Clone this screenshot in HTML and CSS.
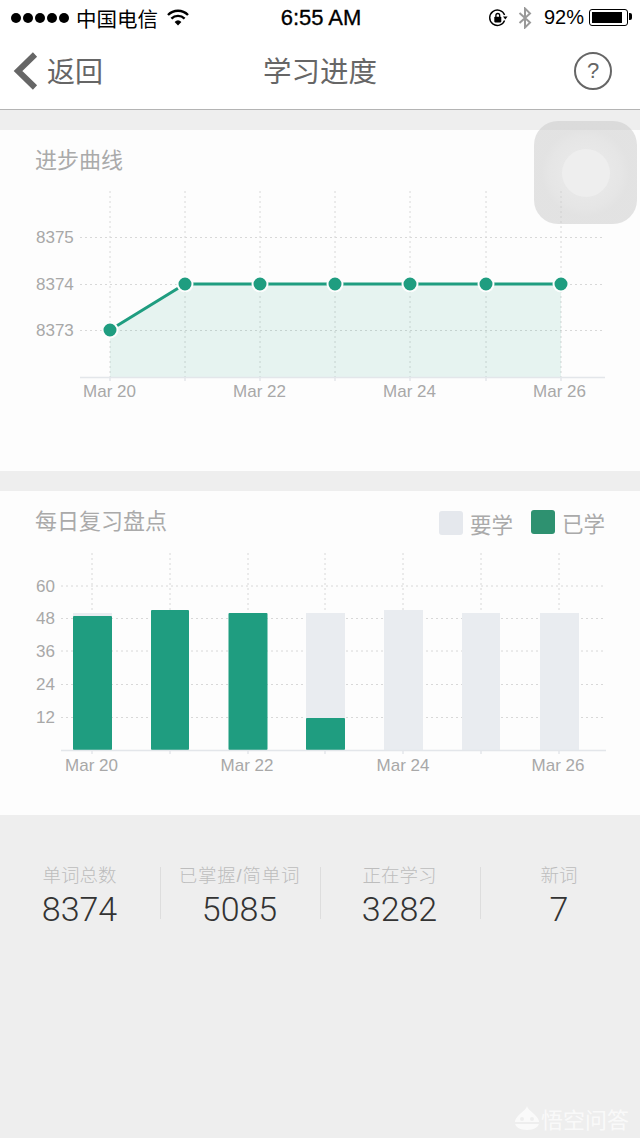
FILE: index.html
```html
<!DOCTYPE html>
<html lang="zh-CN">
<head>
    <meta charset="UTF-8">
    <meta name="viewport" content="width=device-width, initial-scale=1.0">
    <title>学习进度</title>
    <link rel="stylesheet" href="styles.css">
</head>
<body>

    <!-- Status bar -->
    <div class="status-bar">
        <div class="status-left">
            <div class="signal"><span></span><span></span><span></span><span></span><span></span></div>
            <span class="carrier">中国电信</span>
            <svg class="wifi" width="22" height="17" viewBox="0 0 22 17">
                <path d="M1 6 A14 14 0 0 1 21 6" fill="none" stroke="#000" stroke-width="2.4"/>
                <path d="M4.4 9.6 A9.4 9.4 0 0 1 17.6 9.6" fill="none" stroke="#000" stroke-width="2.4"/>
                <path d="M7.6 12.9 A5 5 0 0 1 14.4 12.9 L11 16.4 Z" fill="#000"/>
            </svg>
        </div>
        <div class="clock">6:55 AM</div>
        <div class="status-right">
            <svg width="20" height="20" viewBox="0 0 20 20">
                <path d="M16.6 12.5 A7.7 7.7 0 1 1 16.6 7" fill="none" stroke="#000" stroke-width="1.4"/>
                <path d="M15 8.6 L19.6 8.6 L17.3 11.4 Z" fill="#000"/>
                <rect x="6.3" y="8.8" width="7" height="5.6" rx="0.8" fill="#000"/>
                <path d="M7.9 9 V7.4 A1.9 1.9 0 0 1 11.7 7.4 V9" fill="none" stroke="#000" stroke-width="1.3"/>
            </svg>
            <svg class="bluetooth" width="14" height="22" viewBox="0 0 14 22">
                <path d="M1.5 6 L12 15.6 L7 20.5 V1.5 L12 6.4 L1.5 16" fill="none" stroke="#999" stroke-width="2"/>
            </svg>
            <span class="battery-text">92%</span>
            <div class="battery"><div class="battery-level"></div></div>
        </div>
    </div>

    <!-- Nav -->
    <div class="nav">
        <div class="nav-back">
            <svg width="26" height="38" viewBox="0 0 26 38">
                <path d="M22 2.5 L5 19 L22 35.5" fill="none" stroke="#666" stroke-width="6"/>
            </svg>
            <span class="nav-back-text">返回</span>
        </div>
        <div class="nav-title">学习进度</div>
        <div class="nav-help">?</div>
    </div>

    <!-- Progress curve -->
    <div class="card card-curve">
        <div class="card-head">
            <div class="card-title">进步曲线</div>
        </div>
        <svg class="chart" width="640" height="295" viewBox="0 176 640 295">
            <path class="grid" d="M80 237.5H605M80 284.5H605M80 330.5H605"/>
            <path class="grid" d="M110 191V377M185 191V377M260 191V377M335 191V377M410 191V377M486 191V377M561 191V377"/>
            <path class="area" d="M110 330L185 284H561V377H110Z"/>
            <path class="axis" d="M80 377.5H605"/>
            <path class="axis" d="M110 377V381M185 377V381M260 377V381M335 377V381M410 377V381M486 377V381M561 377V381"/>
            <path class="line" d="M110 330L185 284H561"/>
            <circle class="dot" cx="110" cy="330" r="7.5"/>
            <circle class="dot" cx="185" cy="284" r="7.5"/>
            <circle class="dot" cx="260" cy="284" r="7.5"/>
            <circle class="dot" cx="335" cy="284" r="7.5"/>
            <circle class="dot" cx="410" cy="284" r="7.5"/>
            <circle class="dot" cx="486" cy="284" r="7.5"/>
            <circle class="dot" cx="561" cy="284" r="7.5"/>
            <text x="36" y="243">8375</text>
            <text x="36" y="290">8374</text>
            <text x="36" y="336">8373</text>
            <text class="mid" x="109.500" y="397">Mar 20</text>
            <text class="mid" x="259.500" y="397">Mar 22</text>
            <text class="mid" x="409.500" y="397">Mar 24</text>
            <text class="mid" x="559.500" y="397">Mar 26</text>
        </svg>
    </div>

    <!-- Daily review -->
    <div class="card card-daily">
        <div class="card-head">
            <div class="card-title">每日复习盘点</div>
            <div class="legend">
                <div class="legend-item legend-todo"><i></i>要学</div>
                <div class="legend-item legend-done"><i></i>已学</div>
            </div>
        </div>
        <svg class="chart" width="640" height="278" viewBox="0 537 640 278">
            <path class="grid" d="M61 586H606M61 618.500H606M61 651H606M61 684.500H606M61 717.500H606"/>
            <path class="grid" d="M92 553V750M170 553V750M248 553V750M325 553V750M403 553V750M481 553V750M559 553V750"/>
            <rect class="bar-todo" x="73" y="613" width="39" height="137"/>
            <rect class="bar-todo" x="306" y="613" width="39" height="137"/>
            <rect class="bar-todo" x="384" y="610" width="39" height="140"/>
            <rect class="bar-todo" x="462" y="613" width="38" height="137"/>
            <rect class="bar-todo" x="540" y="613" width="39" height="137"/>
            <rect class="bar-done" x="73" y="616" width="39" height="134" rx="1"/>
            <rect class="bar-done" x="151" y="610" width="38" height="140" rx="1"/>
            <rect class="bar-done" x="228.500" y="613" width="39" height="137" rx="1"/>
            <rect class="bar-done" x="306" y="718" width="39" height="32" rx="1"/>
            <path class="axis" d="M61 750.500H606"/>
            <path class="axis" d="M92 750V754M170 750V754M248 750V754M325 750V754M403 750V754M481 750V754M559 750V754"/>
            <text x="36" y="592">60</text>
            <text x="36" y="624">48</text>
            <text x="36" y="657">36</text>
            <text x="36" y="690">24</text>
            <text x="36" y="723">12</text>
            <text class="mid" x="91.500" y="771">Mar 20</text>
            <text class="mid" x="247" y="771">Mar 22</text>
            <text class="mid" x="403" y="771">Mar 24</text>
            <text class="mid" x="558" y="771">Mar 26</text>
        </svg>
    </div>

    <!-- Totals -->
    <div class="stats">
        <div class="stat">
            <div class="stat-label">单词总数</div>
            <div class="stat-num">8374</div>
        </div>
        <div class="stat">
            <div class="stat-label stat-label-wide">已掌握/简单词</div>
            <div class="stat-num">5085</div>
        </div>
        <div class="stat">
            <div class="stat-label">正在学习</div>
            <div class="stat-num">3282</div>
        </div>
        <div class="stat">
            <div class="stat-label">新词</div>
            <div class="stat-num">7</div>
        </div>
    </div>

    <!-- Floating touch button -->
    <div class="float-btn"><div class="float-core"></div></div>

    <!-- Watermark -->
    <div class="watermark">
        <svg width="28" height="26" viewBox="0 0 28 26">
            <path d="M14 1 C15 6 24 9 26 16 C27 22 21 25 14 25 C7 25 1 22 2 16 C4 9 13 6 14 1 Z" fill="#fff" fill-opacity="0.7"/>
            <path d="M1 18 H27" stroke="#eee" stroke-width="2"/>
            <circle cx="9" cy="14" r="2" fill="#eee"/>
            <circle cx="19" cy="14" r="2" fill="#eee"/>
        </svg>
        <span>悟空问答</span>
    </div>

</body>
</html>
```

FILE: styles.css
```css
html, body {
    margin: 0;
    padding: 0;
}

body {
    position: relative;
    width: 640px;
    height: 1138px;
    overflow: hidden;
    background-color: #eeeeee;
    font-family: "Liberation Sans", "Noto Sans CJK SC", sans-serif;
}

/* Status bar */
.status-bar {
    display: flex;
    align-items: center;
    justify-content: space-between;
    height: 35px;
    padding: 0 9px 5px 11px;
    background-color: #fff;
    color: #000;
    font-size: 20px;
}

.status-left,
.status-right {
    display: flex;
    align-items: center;
    width: 220px;
}

.status-right {
    justify-content: flex-end;
}

.signal {
    display: flex;
    gap: 2px;
    margin-right: 7px;
}

.signal span {
    width: 10px;
    height: 10px;
    border-radius: 50%;
    background-color: #000;
}

.carrier {
    font-size: 20.500px;
    margin-right: 9px;
}

.clock {
    font-size: 22px;
    -webkit-text-stroke: 0.3px #000;
}

.bluetooth {
    margin: 0 12px 0 10px;
}

.battery-text {
    margin-right: 5px;
}

.battery {
    position: relative;
    box-sizing: border-box;
    width: 39px;
    height: 17px;
    padding: 2px;
    border: 1px solid #000;
    border-radius: 3px;
    margin-right: 3px;
}

.battery::after {
    content: '';
    position: absolute;
    top: 3px;
    right: -5px;
    width: 3px;
    height: 7px;
    border-radius: 0 2px 2px 0;
    background-color: #000;
}

.battery-level {
    width: 92%;
    height: 100%;
    background-color: #000;
}

/* Nav */
.nav {
    display: grid;
    grid-template-columns: 1fr auto 1fr;
    align-items: center;
    height: 62px;
    padding: 0 28px 7px;
    background-color: #fff;
    border-bottom: 1px solid #b4b4b4;
    color: #666;
}

.nav-back {
    display: flex;
    align-items: center;
    gap: 8px;
    margin-left: -15px;
    font-size: 28px;
}

.nav-back-text {
    padding-bottom: 2px;
}

.nav-title {
    padding-bottom: 4px;
    font-size: 28.500px;
}

.nav-help {
    box-sizing: border-box;
    justify-self: end;
    width: 38px;
    height: 38px;
    border: 2px solid #666;
    border-radius: 50%;
    font-size: 22px;
    line-height: 34px;
    text-align: center;
}

/* Cards */
.card {
    background-color: #fdfdfd;
}

.card-curve {
    height: 341px;
    margin: 20px 0;
}

.card-daily {
    height: 324px;
}

.card-head {
    display: flex;
    justify-content: space-between;
    height: 30px;
    padding: 16px 35px 0;
}

.card-title {
    font-size: 22px;
    line-height: 30px;
    color: #aaaaaa;
}

.legend {
    display: flex;
    gap: 18px;
}

.legend-item {
    display: flex;
    align-items: center;
    gap: 7px;
    font-size: 21.500px;
    color: #aaaaaa;
}

.legend-item i {
    width: 24px;
    height: 24px;
    border-radius: 3px;
}

.legend-todo {
    margin-top: 2px;
}

.legend-todo i {
    background-color: #e5e8ed;
}

.legend-done i {
    background-color: #2e9170;
}

/* Charts */
.chart {
    display: block;
}

.chart text {
    font-size: 17px;
    fill: #a8a8a8;
}

.chart text.mid {
    text-anchor: middle;
}

.grid {
    fill: none;
    stroke: #d8d8d8;
    stroke-width: 1;
    stroke-dasharray: 2 3;
}

.axis {
    fill: none;
    stroke: #e3e6ea;
    stroke-width: 1.500;
}

.area {
    fill: #1f9d80;
    fill-opacity: 0.1;
}

.line {
    fill: none;
    stroke: #1f9d80;
    stroke-width: 3;
}

.dot {
    fill: #1f9d80;
    stroke: #fdfdfd;
    stroke-width: 2;
}

.bar-todo {
    fill: #e9ecf0;
}

.bar-done {
    fill: #1f9d80;
}

/* Totals */
.stats {
    display: grid;
    grid-template-columns: repeat(4, 160px);
    padding-top: 52px;
}

.stat {
    box-sizing: border-box;
    height: 52px;
    padding-right: 2px;
    text-align: center;
    border-left: 1px solid #dddddd;
}

.stat:first-child {
    border-left: none;
    padding-right: 1px;
}

.stat:last-child {
    padding-right: 3px;
}

.stat-label {
    height: 20px;
    font-size: 18.500px;
    font-weight: 300;
    line-height: 18px;
    color: #bdbdbd;
}

.stat-label-wide {
    letter-spacing: 0.8px;
}

.stat-num {
    font-family: Roboto, "Liberation Sans", sans-serif;
    font-size: 34px;
    font-weight: 300;
    line-height: 44px;
    color: #333;
}

/* Floating touch button */
.float-btn {
    position: absolute;
    top: 121px;
    left: 534px;
    display: flex;
    align-items: center;
    justify-content: center;
    width: 103px;
    height: 103px;
    border-radius: 24px;
    background: radial-gradient(circle, rgba(210, 210, 210, 0.5) 25px, rgba(206, 206, 206, 0.5) 36px, rgba(200, 200, 200, 0.5) 44px);
}

.float-core {
    width: 48px;
    height: 48px;
    border-radius: 50%;
    background-color: #eeeeee;
}

/* Watermark */
.watermark {
    position: absolute;
    top: 1102px;
    left: 513px;
    display: flex;
    align-items: center;
    font-size: 22px;
    color: rgba(255, 255, 255, 0.7);
}
```
